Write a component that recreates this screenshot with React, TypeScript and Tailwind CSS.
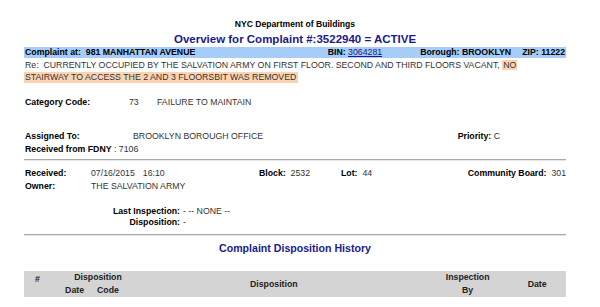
export default function App() {
  return (
    <div className="min-h-[307px] bg-white font-['Liberation_Sans',Arial,sans-serif] text-[8.75px] leading-[11px] text-[#333]">
      <div className="ml-[24px] w-[542px] pt-[19px]">
        <div className="text-center font-bold text-black text-[8.6px] leading-[11px]">NYC Department of Buildings</div>
        <div className="mt-[2px] text-center font-bold text-[#1a1a8c] text-[11.5px] leading-[14px]">
          Overview for Complaint #:3522940 = ACTIVE
        </div>

        <div className="mt-[1px] flex h-[11px] items-center bg-[#a6cdf7] font-bold text-black">
          <span className="pl-[1px]">Complaint at:&nbsp; 981 MANHATTAN AVENUE</span>
          <span className="ml-auto">BIN: <span className="font-normal text-[#1a1a8c] underline">3064281</span></span>
          <span className="ml-[38px]">Borough: BROOKLYN</span>
          <span className="ml-[11px] mr-[1px]">ZIP: 11222</span>
        </div>
        <div className="mt-[2px] pl-[1px]">
          Re:&nbsp; CURRENTLY OCCUPIED BY THE SALVATION ARMY ON FIRST FLOOR. SECOND AND THIRD FLOORS VACANT,{" "}
          <span className="bg-[#fbd3b1] px-[1px]">NO</span>
        </div>
        <div className="mt-[1px] inline-block bg-[#fbd3b1] pl-[1px] pr-[2px]">
          STAIRWAY TO ACCESS THE 2 AND 3 FLOORSBIT WAS REMOVED
        </div>

        <div className="mt-[14px] flex">
          <span className="w-[105px] pl-[1px] font-bold text-black">Category Code:</span>
          <span className="w-[28px]">73</span>
          <span>FAILURE TO MAINTAIN</span>
        </div>

        <div className="mt-[23px] flex">
          <span className="w-[109px] pl-[1px] font-bold text-black">Assigned To:</span>
          <span>BROOKLYN BOROUGH OFFICE</span>
          <span className="ml-auto mr-[66px]">
            <span className="font-bold text-black">Priority:</span> C
          </span>
        </div>
        <div className="mt-[2px] pl-[1px]">
          <span className="font-bold text-black">Received from FDNY</span> : 7106
        </div>

        <div className="mt-[4px] h-[2px] border-t border-b border-t-[#a9a9a9] border-b-[#e5e5e5]" />

        <div className="mt-[7px] flex">
          <span className="w-[67px] pl-[1px] font-bold text-black">Received:</span>
          <span className="flex w-[168px] gap-[8px]">
            <span>07/16/2015</span>
            <span>16:10</span>
          </span>
          <span className="w-[82px]">
            <span className="font-bold text-black">Block:</span>&nbsp; 2532
          </span>
          <span>
            <span className="font-bold text-black">Lot:</span>&nbsp; 44
          </span>
          <span className="ml-auto">
            <span className="font-bold text-black">Community Board:</span>&nbsp; 301
          </span>
        </div>
        <div className="mt-[2px] flex">
          <span className="w-[67px] pl-[1px] font-bold text-black">Owner:</span>
          <span>THE SALVATION ARMY</span>
        </div>

        <div className="mt-[14px] grid grid-cols-[156px_1fr] gap-x-[3px]">
          <span className="text-right font-bold text-black">Last Inspection:</span>
          <span>- -- NONE --</span>
          <span className="text-right font-bold text-black">Disposition:</span>
          <span>-</span>
        </div>

        <div className="mt-[6px] h-[2px] border-t border-b border-t-[#a9a9a9] border-b-[#e5e5e5]" />

        <div className="mt-[6px] text-center font-bold text-[#1a1a8c] text-[10.6px] leading-[13px]">
          Complaint Disposition History
        </div>

        <div className="mt-[16px] flex h-[26px] items-center bg-[#d4d4d4] font-bold text-[#222]">
          <span className="w-[28px] pl-[11px] self-start pt-[3px]">#</span>
          <div className="flex w-[80px] flex-col items-center">
            <span className="pl-[12px]">Disposition</span>
            <div className="mt-[2px] flex gap-[13px]">
              <span>Date</span>
              <span>Code</span>
            </div>
          </div>
          <span className="ml-[118px]">Disposition</span>
          <div className="ml-[148px] flex w-[44px] flex-col items-center">
            <span>Inspection</span>
            <span className="mt-[2px]">By</span>
          </div>
          <span className="ml-[38px]">Date</span>
        </div>
      </div>
    </div>
  );
}
